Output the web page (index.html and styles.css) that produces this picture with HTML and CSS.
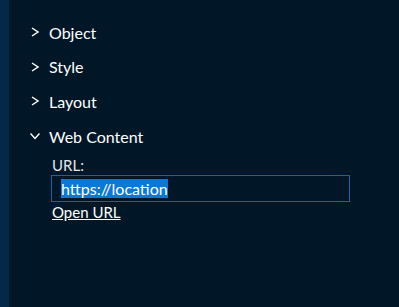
FILE: index.html
```html
<!DOCTYPE html>
<html lang="en">
<head>
    <meta charset="UTF-8">
    <title>Properties</title>
    <link rel="stylesheet" href="styles.css">
</head>
<body>

<div class="panel">
    <div class="strip"></div>

    <div class="sections">
        <div class="section">
            <div class="header">
                <svg class="chev" width="10" height="10" viewBox="0 0 10 10"><polyline points="2,1 8,5 2,9" fill="none" stroke="#fff" stroke-width="1.5"/></svg>
                <span>Object</span>
            </div>
        </div>

        <div class="section">
            <div class="header">
                <svg class="chev" width="10" height="10" viewBox="0 0 10 10"><polyline points="2,1 8,5 2,9" fill="none" stroke="#fff" stroke-width="1.5"/></svg>
                <span>Style</span>
            </div>
        </div>

        <div class="section">
            <div class="header">
                <svg class="chev" width="10" height="10" viewBox="0 0 10 10"><polyline points="2,1 8,5 2,9" fill="none" stroke="#fff" stroke-width="1.5"/></svg>
                <span>Layout</span>
            </div>
        </div>

        <!-- expanded -->
        <div class="section open">
            <div class="header">
                <svg class="chev" width="10" height="10" viewBox="0 0 10 10"><polyline points="0.5,2.5 5,7.5 9.5,2.5" fill="none" stroke="#fff" stroke-width="1.5"/></svg>
                <span>Web Content</span>
            </div>
            <div class="body">
                <label class="lbl">URL:</label>
                <div class="field"><span class="sel">https://location</span></div>
                <a class="link" href="#">Open URL</a>
            </div>
        </div>
    </div>
</div>

</body>
</html>
```

FILE: styles.css
```css
body {
    margin: 0;
    background: #011728;
    font-family: Lato, "Open Sans", sans-serif;
    color: #fff;
}
.panel {
    display: flex;
    height: 307px;
}
.strip {
    width: 9px;
    background: #03284a;
}
.sections {
    flex: 1;
    padding-top: 21px;
    padding-left: 21px;
}
.header {
    display: flex;
    align-items: center;
    height: 22px;
    margin-bottom: 12.7px;
    font-size: 16px;
}
.chev {
    margin-right: 9px;
}
.open .header {
    margin-bottom: 9px;
}
.body {
    padding-left: 22px;
    display: flex;
    flex-direction: column;
    align-items: flex-start;
}
.lbl {
    font-size: 15px;
    color: #e6e6e6;
    line-height: 18px;
}
.field {
    box-sizing: border-box;
    width: 299px;
    height: 27px;
    border: 1px solid #1462a8;
    margin-top: 1px;
    margin-left: -1px;
    padding-left: 9px;
    display: flex;
    align-items: center;
    font-size: 16px;
}
.sel {
    background: #0a78d7;
    color: #fff;
    line-height: 19px;
}
.link {
    color: #fff;
    font-size: 15px;
    line-height: 18px;
    margin-top: 1px;
}
```
